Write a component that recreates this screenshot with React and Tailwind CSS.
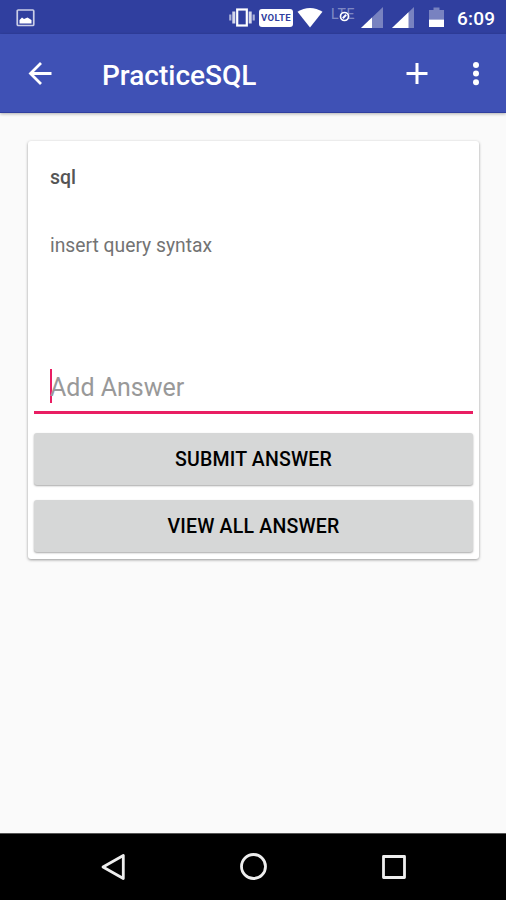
import { useState } from "react"

const StatusBar = () => {
  return (
    <div className="flex h-[34px] items-start bg-[#303f9f] pt-[7px] text-white">
      <svg className="ml-4 mt-0.5 h-[18px] w-[19px]" viewBox="0 0 19 18" fill="none">
        <rect x="1.25" y="1" width="16.5" height="15.5" rx="1" stroke="currentColor" strokeOpacity="0.75" strokeWidth="1.7" />
        <path d="M3.500 14.500V11l2.500-2.500 2 1.500 3.500-1.500 4 2.500V14.500z" fill="currentColor" />
      </svg>

      <svg className="ml-[194px] h-[21px] w-[26px]" viewBox="0 0 26 21" fill="none" stroke="currentColor">
        <rect x="8.200" y="2.500" width="9.600" height="16" strokeWidth="2.200" />
        <path d="M4.800 4.500v12M21.200 4.500v12" strokeWidth="3" strokeOpacity="0.8" />
        <path d="M1.300 7.500v6M24.700 7.500v6" strokeWidth="2.200" strokeOpacity="0.6" />
      </svg>

      <div className="ml-[4px] mt-[2px] flex h-[18px] w-[34px] items-center justify-center rounded-[3px] bg-white text-[9.5px] font-bold tracking-[0.4px] text-[#303f9f]">
        VOLTE
      </div>

      <svg className="ml-1 h-[21px] w-[26px]" viewBox="0 0 26 21" fill="currentColor">
        <path d="M0.500 4.800C8-0.300 18-0.300 25.500 4.800L13 20.500z" />
      </svg>

      <div className="relative ml-2 h-[21px] w-[26px] text-[14px] leading-[14px] tracking-[0.8px] text-white/40">
        LTE
        <svg className="absolute left-2 top-[4px] h-[11px] w-[11px] text-white" viewBox="0 0 11 11" fill="none" stroke="currentColor">
          <circle cx="5.500" cy="5.500" r="4" fill="#303f9f" strokeWidth="1.700" />
          <path d="M7.200 3.800L3.800 7.200" strokeWidth="2" />
        </svg>
      </div>

      <svg className="ml-[4px] h-[21px] w-[22px]" viewBox="0 0 22 21" fill="currentColor">
        <path d="M0 21L22 0V21z" fillOpacity="0.35" />
        <path d="M0 21L11 10.500V21z" />
      </svg>

      <svg className="ml-[9px] h-[21px] w-[22px]" viewBox="0 0 22 21" fill="currentColor">
        <path d="M0 21L22 0V21z" fillOpacity="0.35" />
        <path d="M0 21L16.500 5.250V21z" />
      </svg>

      <svg className="ml-[15px] h-[21px] w-[15px]" viewBox="0 0 15 21" fill="currentColor">
        <path d="M0 12.500V3h4.500V0.500h6V3H15v9.500z" fillOpacity="0.35" />
        <path d="M0 12.500h15V20H0z" />
      </svg>

      <span className="ml-[13px] mt-px text-[19px] font-medium leading-[21px] tracking-[0.2px]">6:09</span>
    </div>
  )
}

const Toolbar = () => {
  return (
    <div className="relative z-10 flex h-[79px] items-center border-b border-[#303f9f] bg-[#3f51b5] text-white shadow-[0_1px_3px_rgba(0,0,0,0.3)]">
      <button aria-label="Back" className="ml-7">
        <svg className="h-6 w-6" viewBox="0 0 24 24" fill="none" stroke="currentColor" strokeWidth="2.800">
          <path d="M23.500 12.500H2.500M13 2L2.500 12.500L13 23" />
        </svg>
      </button>
      <h1 className="ml-[50px] mt-[5px] text-[28px] font-medium leading-8">PracticeSQL</h1>
      <button aria-label="Add" className="ml-auto mr-11">
        <svg className="h-[22px] w-[22px]" viewBox="0 0 22 22" fill="none" stroke="currentColor" strokeWidth="3">
          <path d="M0.500 11.500h21M11 1v21" />
        </svg>
      </button>
      <button aria-label="More options" className="mr-[26px]">
        <svg className="h-[26px] w-2" viewBox="0 0 8 26" fill="currentColor">
          <circle cx="4" cy="5" r="3" />
          <circle cx="4" cy="13.600" r="3" />
          <circle cx="4" cy="22.200" r="3" />
        </svg>
      </button>
    </div>
  )
}

const ActionButton = ({ children }) => {
  return (
    <button className="flex h-[52px] w-full items-center justify-center rounded-[3px] bg-[#d6d7d7] pt-0.5 text-[19.500px] font-medium tracking-[0.2px] text-black shadow-[0_1px_2px_rgba(0,0,0,0.35)]">
      {children}
    </button>
  )
}

const QuestionCard = () => {
  const [answer, setAnswer] = useState("")

  return (
    <div className="mx-7 mt-7 flex h-[418px] w-[451px] flex-col rounded-[3px] bg-white px-1.5 shadow-[0_1px_3px_rgba(0,0,0,0.4)]">
      <h2 className="ml-4 mt-[25px] text-[19.500px] font-medium leading-6 text-[#555]">sql</h2>
      <p className="ml-4 mt-11 text-[19.300px] leading-6 text-[#737373]">insert query syntax</p>

      <div className="mt-[111px] flex h-[45px] border-b-[3px] border-[#e91e63] pl-4">
        <span className="-mr-0.5 h-[34px] w-0.5 shrink-0 bg-[#e91e63]" />
        <input
          className="mt-px h-[36px] w-full bg-transparent text-[25px] text-[#555] outline-none placeholder:text-[#999]"
          placeholder="Add Answer"
          value={answer}
          onChange={(e) => setAnswer(e.target.value)}
        />
      </div>

      <div className="mt-[19px] flex flex-col gap-[15px]">
        <ActionButton>SUBMIT ANSWER</ActionButton>
        <ActionButton>VIEW ALL ANSWER</ActionButton>
      </div>
    </div>
  )
}

const NavigationBar = () => {
  return (
    <div className="mt-auto flex h-[67px] items-center border-t border-[#555] bg-black text-[#eee]">
      <svg className="ml-[101px] h-7 w-6" viewBox="0 0 24 28" fill="none" stroke="currentColor" strokeWidth="2.800" strokeLinejoin="round">
        <path d="M22.300 2.500V25.500L2 14z" />
      </svg>
      <svg className="ml-[114px] h-7 w-7" viewBox="0 0 28 28" fill="none" stroke="currentColor" strokeWidth="2.800">
        <circle cx="14.500" cy="13.500" r="12" />
      </svg>
      <svg className="ml-[115px] h-6 w-6" viewBox="0 0 24 24" fill="none" stroke="currentColor" strokeWidth="2.800" strokeLinejoin="round">
        <rect x="1.500" y="1.500" width="21" height="21" />
      </svg>
    </div>
  )
}

const App = () => {
  return (
    <div className="flex h-[900px] w-[506px] flex-col overflow-hidden bg-[#fafafa] font-['Roboto',sans-serif]">
      <StatusBar />
      <Toolbar />
      <QuestionCard />
      <NavigationBar />
    </div>
  )
}

export default App
